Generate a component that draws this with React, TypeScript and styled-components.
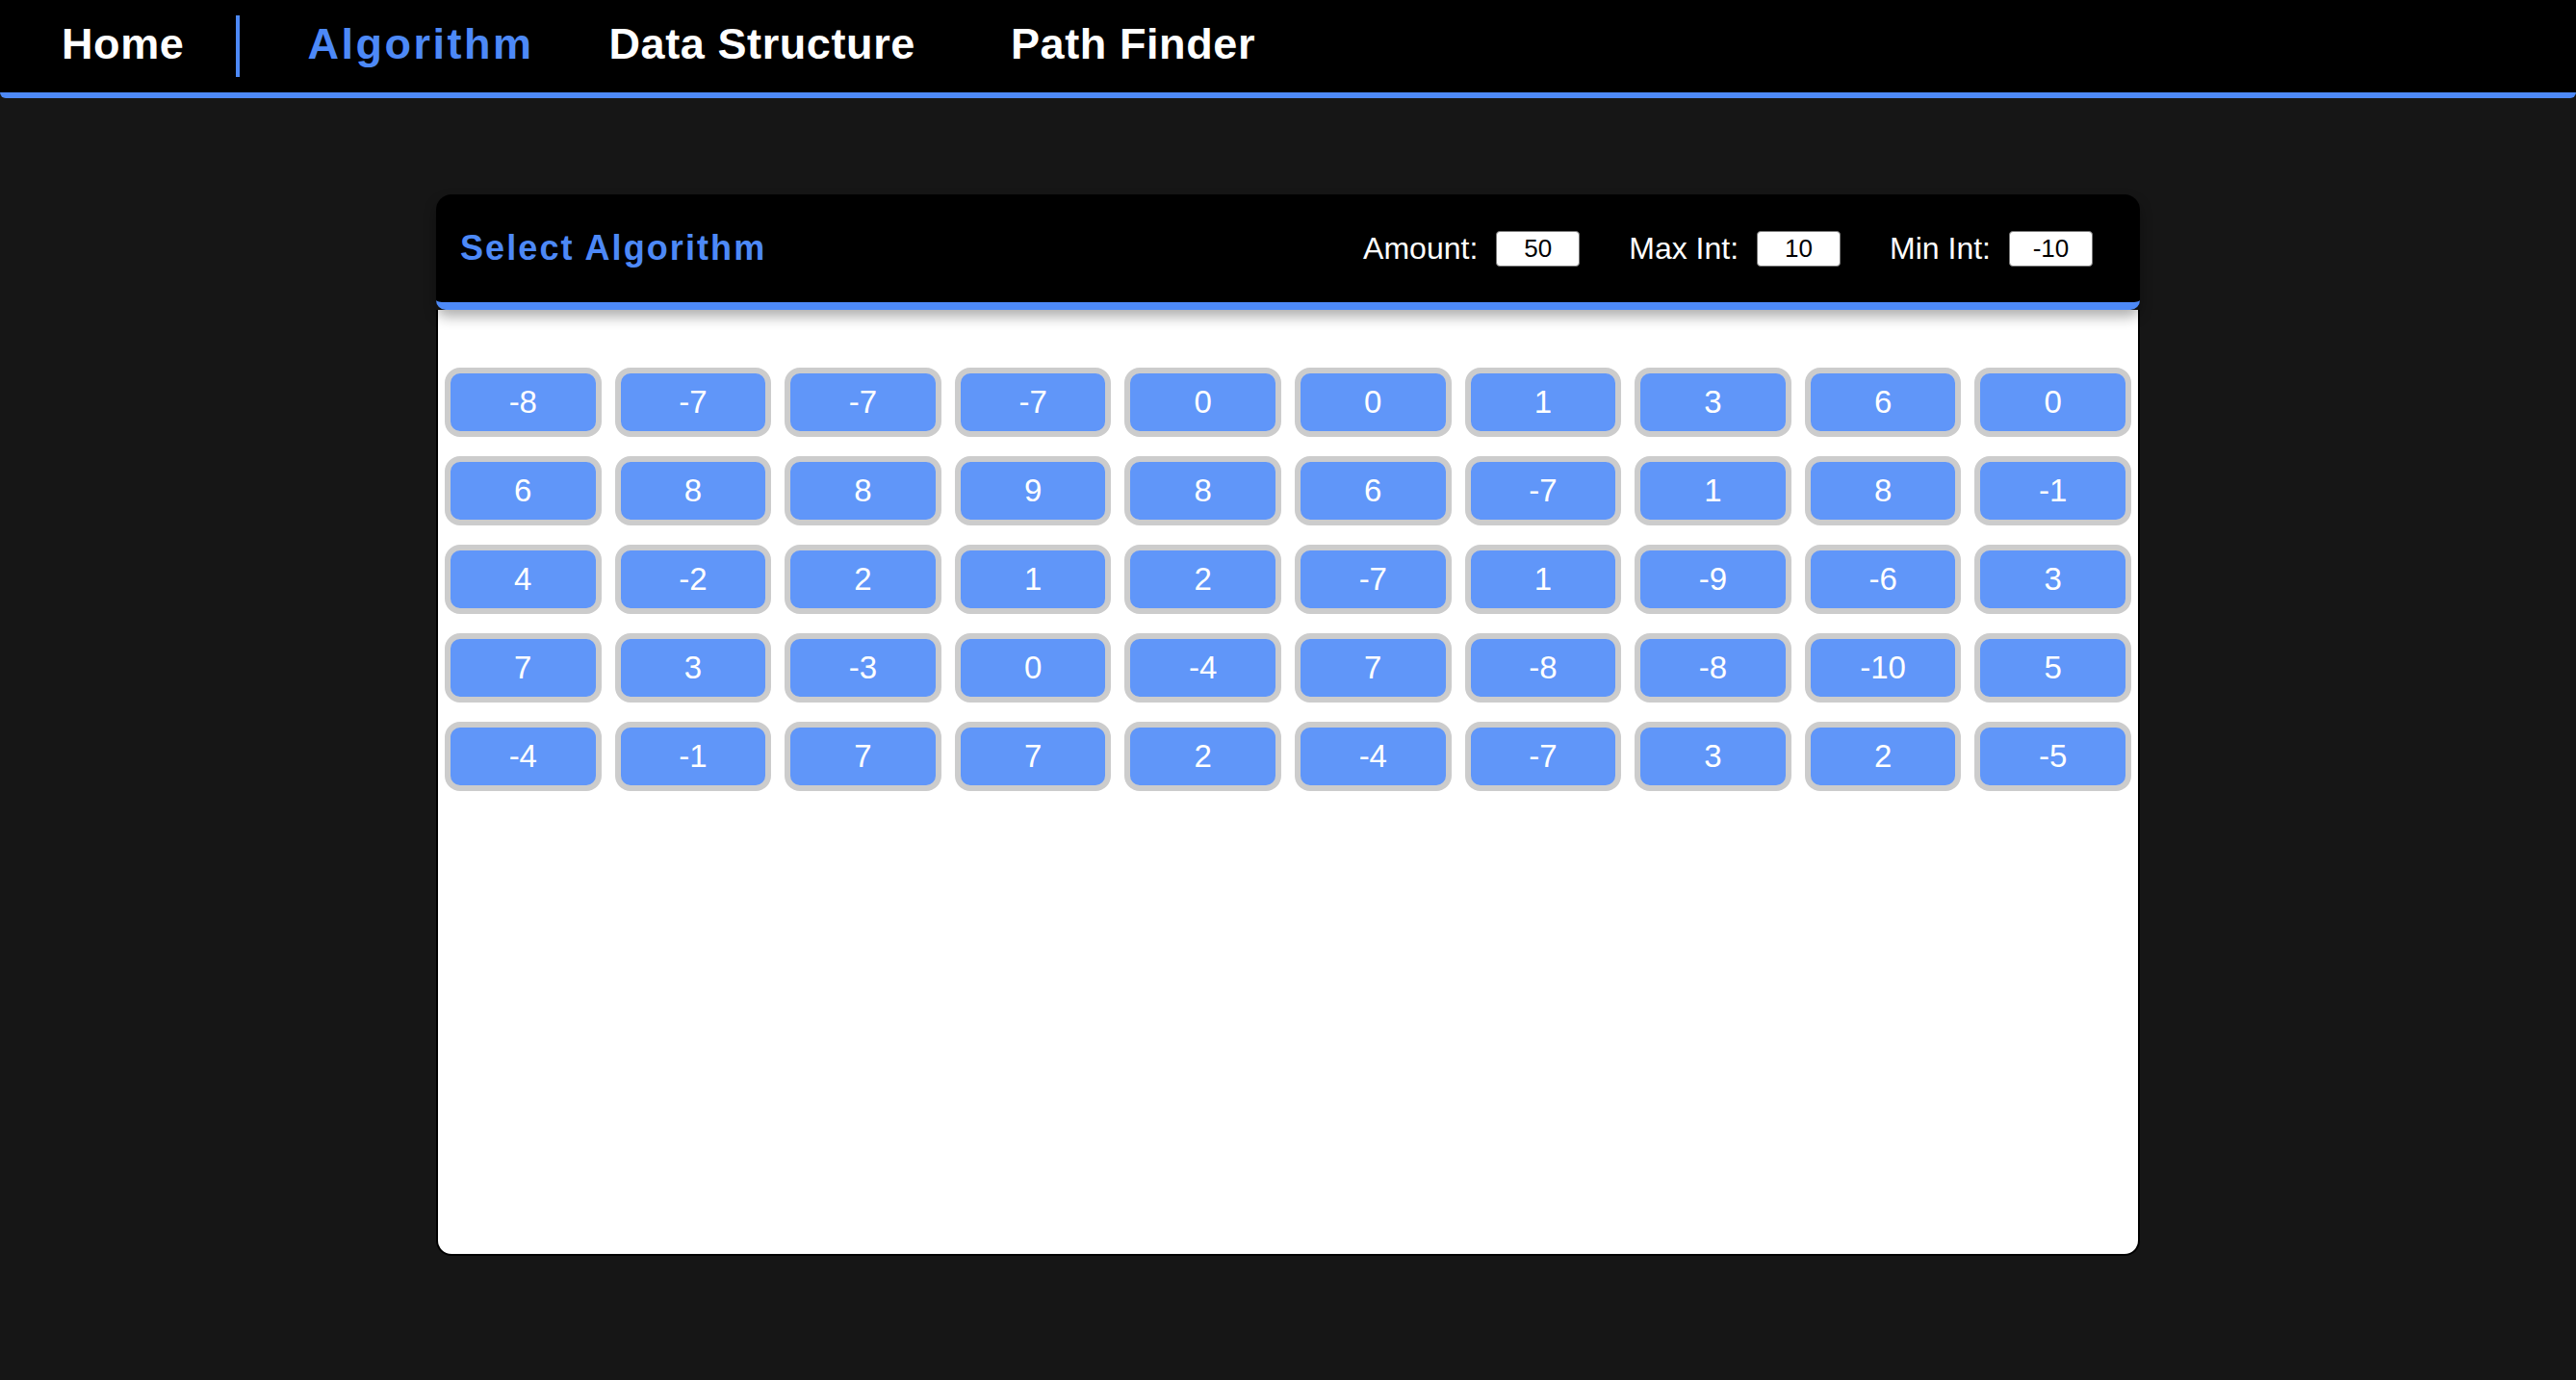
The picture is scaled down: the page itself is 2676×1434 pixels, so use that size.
import React from "react";
import styled, { createGlobalStyle } from "styled-components";

const BLUE = "#4d89f7";
const FONT = `"Liberation Sans", Arial, Helvetica, sans-serif`;

const GlobalStyle = createGlobalStyle`
  html, body {
    margin: 0;
    padding: 0;
    background: #161616;
    font-family: ${FONT};
  }
  #root {
    min-height: 100vh;
  }
`;

const Page = styled.div`
  min-height: 100vh;
  background: #161616;
  display: flex;
  flex-direction: column;
`;

const NavBar = styled.nav`
  display: flex;
  align-items: center;
  height: 96px;
  padding-left: 64px;
  background: #000;
  border-bottom: 6px solid ${BLUE};
  border-radius: 0 0 6px 6px;
`;

const NavLink = styled.a<{ $active?: boolean; $space: number }>`
  font-family: ${FONT};
  font-size: 45px;
  font-weight: 700;
  line-height: 1;
  padding-bottom: 6px;
  letter-spacing: ${(p) => (p.$active ? "2.5px" : "0.6px")};
  color: ${(p) => (p.$active ? BLUE : "#fff")};
  margin-right: ${(p) => p.$space}px;
  text-decoration: none;
  white-space: nowrap;
  cursor: pointer;
`;

const Divider = styled.span`
  width: 4px;
  height: 64px;
  background: ${BLUE};
  margin-right: 70px;
`;

const Panel = styled.section`
  width: 1770px;
  height: 1103px;
  margin: 100px auto 0;
  display: flex;
  flex-direction: column;
`;

const Header = styled.header`
  position: relative;
  z-index: 1;
  height: 112px;
  display: flex;
  align-items: center;
  justify-content: space-between;
  padding: 0 49px 0 25px;
  background: #000;
  border-bottom: 8px solid ${BLUE};
  border-radius: 16px 16px 10px 10px;
  box-shadow: 0 7px 14px rgba(0, 0, 0, 0.32);
`;

const Title = styled.h2`
  margin: 0;
  font-family: ${FONT};
  font-size: 36px;
  font-weight: 700;
  letter-spacing: 2.1px;
  color: ${BLUE};
`;

const Controls = styled.div`
  display: flex;
  align-items: center;
  gap: 51px;
`;

const Field = styled.label`
  display: flex;
  align-items: center;
  gap: 19px;
  font-family: ${FONT};
  font-size: 32px;
  color: #fff;
`;

const NumberInput = styled.input`
  box-sizing: border-box;
  width: 87px;
  height: 37px;
  padding: 0;
  border: 1.5px solid #7a7a7a;
  border-radius: 4px;
  background: #fff;
  color: #000;
  font-family: ${FONT};
  font-size: 26px;
  text-align: center;
  outline: none;
`;

const Body = styled.div`
  flex: 1;
  box-sizing: border-box;
  background: #fff;
  border: 2px solid #000;
  border-top: none;
  border-radius: 0 0 16px 16px;
  padding: 60px 7px;
  display: grid;
  grid-template-columns: repeat(10, 1fr);
  grid-auto-rows: 72px;
  column-gap: 14px;
  row-gap: 20px;
  align-content: start;
`;

const Cell = styled.div`
  box-sizing: border-box;
  height: 72px;
  display: flex;
  align-items: center;
  justify-content: center;
  background: #6096f9;
  border: 6px solid #cccccc;
  border-radius: 16px;
  color: #fff;
  font-family: ${FONT};
  font-size: 33px;
`;

const values = [
  -8, -7, -7, -7, 0, 0, 1, 3, 6, 0,
  6, 8, 8, 9, 8, 6, -7, 1, 8, -1,
  4, -2, 2, 1, 2, -7, 1, -9, -6, 3,
  7, 3, -3, 0, -4, 7, -8, -8, -10, 5,
  -4, -1, 7, 7, 2, -4, -7, 3, 2, -5,
];

export default function App() {
  return (
    <Page>
      <GlobalStyle />
      <NavBar>
        <NavLink $space={54}>Home</NavLink>
        <Divider />
        <NavLink $active $space={78}>Algorithm</NavLink>
        <NavLink $space={99}>Data Structure</NavLink>
        <NavLink $space={0}>Path Finder</NavLink>
      </NavBar>
      <Panel>
        <Header>
          <Title>Select Algorithm</Title>
          <Controls>
            <Field>
              Amount:
              <NumberInput type="text" defaultValue="50" />
            </Field>
            <Field>
              Max Int:
              <NumberInput type="text" defaultValue="10" />
            </Field>
            <Field>
              Min Int:
              <NumberInput type="text" defaultValue="-10" />
            </Field>
          </Controls>
        </Header>
        <Body>
          {values.map((v, i) => (
            <Cell key={i}>{v}</Cell>
          ))}
        </Body>
      </Panel>
    </Page>
  );
}
